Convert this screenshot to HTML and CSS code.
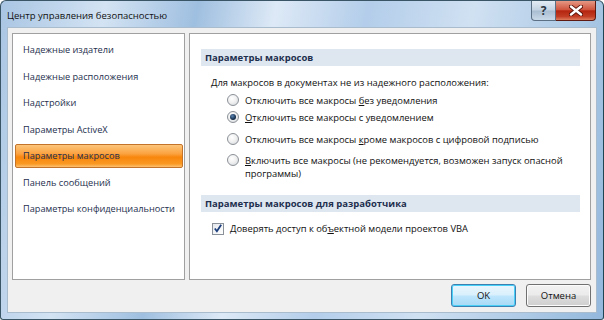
FILE: index.html
```html
<!DOCTYPE html>
<html lang="ru">
<head>
<meta charset="UTF-8" />
<title>Центр управления безопасностью</title>
<link rel="stylesheet" href="styles.css">
</head>
<body>

<div class="window">
  <div class="titlebar">
    <span class="title">Центр управления безопасностью</span>
    <div class="caption-buttons">
      <span class="cap-btn cap-help">?</span>
      <span class="cap-btn cap-close">
        <svg width="14" height="11" viewBox="0 0 14 11">
          <path d="M2 1.5 L12 9.5 M12 1.5 L2 9.5" stroke="#5a1208" stroke-width="4.2" stroke-linecap="round"/>
          <path d="M2 1.5 L12 9.5 M12 1.5 L2 9.5" stroke="#fff" stroke-width="2.4" stroke-linecap="round"/>
        </svg>
      </span>
    </div>
  </div>

  <div class="client">
    <div class="panes">
      <ul class="nav">
        <li>Надежные издатели</li>
        <li>Надежные расположения</li>
        <li>Надстройки</li>
        <li>Параметры ActiveX</li>
        <li class="active">Параметры макросов</li>
        <li>Панель сообщений</li>
        <li>Параметры конфиденциальности</li>
      </ul>

      <div class="content">
        <div class="section-head">Параметры макросов</div>
        <p class="intro">Для макросов в документах не из надежного расположения:</p>
        <div class="options">
          <label class="option"><span class="radio"></span><span>Отключить все макросы <u>б</u>ез уведомления</span></label>
          <label class="option"><span class="radio checked"></span><span><u>О</u>тключить все макросы с уведомлением</span></label>
          <label class="option"><span class="radio"></span><span>Отключить все макросы <u>к</u>роме макросов с цифровой подписью</span></label>
          <label class="option"><span class="radio"></span><span><u>В</u>ключить все макросы (не рекомендуется, возможен запуск опасной<br>программы)</span></label>
        </div>

        <div class="section-head dev">Параметры макросов для разработчика</div>
        <label class="check-row">
          <span class="checkbox">
            <svg width="11" height="11" viewBox="0 0 11 11">
              <path d="M2 5.5 L4.3 8.5 L9 1.5" fill="none" stroke="#1c3f7c" stroke-width="2"/>
            </svg>
          </span>
          <span>Доверять доступ к об<u>ъ</u>ектной модели проектов VBA</span>
        </label>
      </div>
    </div>

    <div class="buttons">
      <button class="btn default">OK</button>
      <button class="btn">Отмена</button>
    </div>
  </div>
</div>

</body>
</html>
```

FILE: styles.css
```css
body {
  margin: 0;
  font-family: 'Open Sans', 'Noto Sans', sans-serif;
  background: #fff;
}
.window {
  width: 604px;
  height: 320px;
  box-sizing: border-box;
  border: 1px solid #3a5566;
  border-right-color: #1f4553;
  border-radius: 6px 6px 3px 3px;
  padding: 0 6px 6px 6px;
  background: linear-gradient(100deg, #a9c5e3 0%, #d3e3f3 16%, #9fbfe0 30%, #dde9f6 42%, #b3cdea 56%, #d0e1f2 72%, #93b8dc 100%);
  display: flex;
  flex-direction: column;
}
.titlebar {
  height: 26px;
  display: flex;
  align-items: flex-start;
}
.title {
  font-size: 9.5px;
  color: #111;
  padding-top: 8px;
}
.caption-buttons {
  margin-left: auto;
  margin-right: 1px;
  display: flex;
}
.cap-btn {
  height: 20px;
  box-sizing: border-box;
  display: flex;
  align-items: center;
  justify-content: center;
}
.cap-help {
  width: 25px;
  border: 1px solid #5b6f85;
  border-top: none;
  border-radius: 0 0 0 4px;
  background: linear-gradient(#e3ecf5, #c2d2e2 48%, #a9bdd1 52%, #c9d9e8);
  font-size: 12px;
  font-weight: bold;
  color: #2a3440;
}
.cap-close {
  width: 40px;
  border: 1px solid #5e1a10;
  border-top: none;
  border-left: none;
  border-radius: 0 0 4px 0;
  background: linear-gradient(#e59884, #cf543e 46%, #b5240f 52%, #c23e25 82%, #de7c5c);
}
.client {
  flex: 1;
  background: #f0f0f0;
  border: 1px solid #a9bccd;
  padding: 5px 5px 5px 4px;
  display: flex;
  flex-direction: column;
}
.panes {
  height: 247px;
  display: flex;
  gap: 4px;
}
.nav {
  width: 173px;
  box-sizing: border-box;
  margin: 0;
  padding: 4px 1px 0 2px;
  list-style: none;
  background: #fff;
  border: 1px solid #a0a0a0;
}
.nav li {
  height: 24px;
  line-height: 24px;
  margin-bottom: 2.5px;
  padding-left: 8px;
  font-size: 9.2px;
  color: #1e2f4e;
  white-space: nowrap;
}
.nav li.active {
  height: 22px;
  line-height: 22px;
  padding-left: 7px;
  border: 1px solid #c3732a;
  border-radius: 2px;
  background: linear-gradient(#fdc57a, #fba240 40%, #f8860c 55%, #fa9822 85%, #fdc070);
  color: #1e2f4e;
}
.content {
  flex: 1;
  background: #fff;
  border: 1px solid #a0a0a0;
  padding: 15px 10px 0 11px;
  font-size: 9.4px;
  color: #111;
}
.section-head {
  height: 17px;
  line-height: 17px;
  padding-left: 4px;
  background: #dee7f0;
  font-size: 9.5px;
  font-weight: bold;
  color: #1e2f4e;
}
.section-head.dev {
  margin-top: 15px;
}
.intro {
  margin: 10px 0 0 10px;
  line-height: 14px;
}
.options {
  margin: 4px 0 0 26px;
  display: flex;
  flex-direction: column;
  gap: 4px;
}
.option {
  display: flex;
  align-items: flex-start;
  gap: 6px;
  line-height: 13px;
  max-width: 345px;
}
.option:nth-child(3) {
  margin-top: 5px;
}
.option:nth-child(4) {
  margin-top: 4px;
}
.radio {
  flex: none;
  width: 12px;
  height: 12px;
  box-sizing: border-box;
  border-radius: 50%;
  border: 1px solid #8b9198;
  background: radial-gradient(circle at 40% 35%, #fff 0%, #f1f1f1 45%, #cfd3d8 100%);
  display: flex;
  align-items: center;
  justify-content: center;
}
.radio.checked::after {
  content: "";
  width: 6px;
  height: 6px;
  border-radius: 50%;
  background: radial-gradient(circle at 40% 35%, #5b86b5, #17314f 60%, #0a1a2c);
}
.check-row {
  margin: 10px 0 0 11px;
  display: flex;
  align-items: center;
  gap: 6px;
  line-height: 13px;
}
.checkbox {
  width: 12px;
  height: 12px;
  box-sizing: border-box;
  border: 1px solid #8b9198;
  background: linear-gradient(135deg, #e5e8ec, #fff);
  display: flex;
  align-items: center;
  justify-content: center;
}
.buttons {
  margin-top: 4px;
  display: flex;
  justify-content: flex-end;
  gap: 10px;
}
.btn {
  width: 65px;
  height: 23px;
  font-family: inherit;
  font-size: 9.5px;
  color: #111;
  border: 1px solid #707070;
  border-radius: 3px;
  background: linear-gradient(#f2f2f2, #ebebeb 48%, #dddddd 52%, #cfcfcf);
  box-shadow: inset 0 0 0 1px #fcfcfc;
}
.btn.default {
  border-color: #3c7fb1;
  box-shadow: inset 0 0 0 1px #48d0f9;
  background: linear-gradient(#eaf6fd, #d9f0fc 48%, #bee6fd 52%, #a7d9f5);
}
```
